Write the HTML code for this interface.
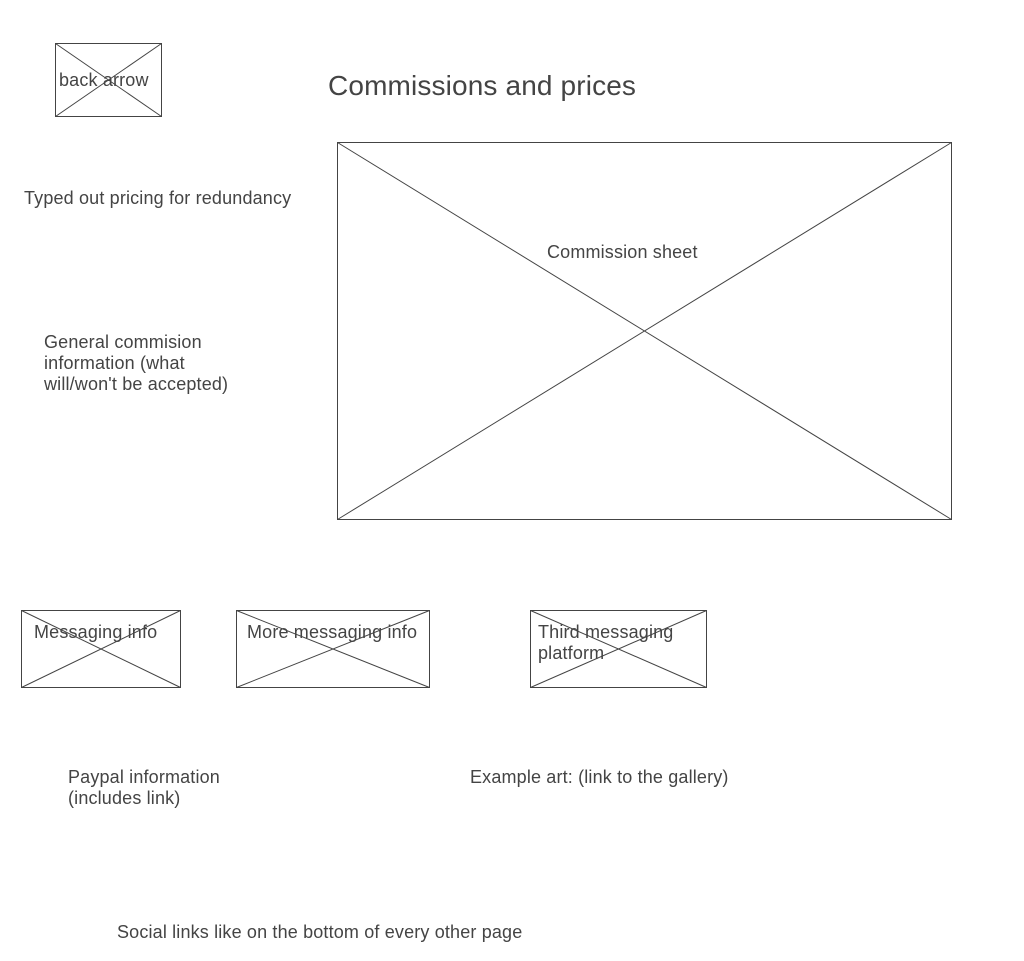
<!DOCTYPE html>
<html><head><style>
body{margin:0;width:1024px;height:961px;background:#fff;position:relative;font-family:"Liberation Sans",sans-serif;color:#444;overflow:hidden}
.t{position:absolute;font-size:18px;line-height:21px;white-space:nowrap;letter-spacing:0.16px}
svg{position:absolute;left:0;top:0}
</style></head><body>
<svg width="1024" height="961">
<g fill="none" stroke="#444" stroke-width="1">
<rect x="55.5" y="43.5" width="106" height="73"/><path d="M55.5 43.5L161.5 116.5M161.5 43.5L55.5 116.5"/>
<rect x="337.5" y="142.5" width="614" height="377"/><path d="M337.5 142.5L951.5 519.5M951.5 142.5L337.5 519.5"/>
<rect x="21.5" y="610.5" width="159" height="77"/><path d="M21.5 610.5L180.5 687.5M180.5 610.5L21.5 687.5"/>
<rect x="236.5" y="610.5" width="193" height="77"/><path d="M236.5 610.5L429.5 687.5M429.5 610.5L236.5 687.5"/>
<rect x="530.5" y="610.5" width="176" height="77"/><path d="M530.5 610.5L706.5 687.5M706.5 610.5L530.5 687.5"/>
</g></svg>
<div class="t" style="left:59px;top:70px">back arrow</div>
<div class="t" style="left:328px;top:70px;font-size:28px;line-height:32px;letter-spacing:0.14px">Commissions and prices</div>
<div class="t" style="left:24px;top:188px">Typed out pricing for redundancy</div>
<div class="t" style="left:547px;top:242px">Commission sheet</div>
<div class="t" style="left:44px;top:332px">General commision<br>information (what<br>will/won't be accepted)</div>
<div class="t" style="left:34px;top:622px">Messaging info</div>
<div class="t" style="left:247px;top:622px">More messaging info</div>
<div class="t" style="left:538px;top:622px">Third messaging<br>platform</div>
<div class="t" style="left:68px;top:767px">Paypal information<br>(includes link)</div>
<div class="t" style="left:470px;top:767px">Example art: (link to the gallery)</div>
<div class="t" style="left:117px;top:922px">Social links like on the bottom of every other page</div>
</body></html>
